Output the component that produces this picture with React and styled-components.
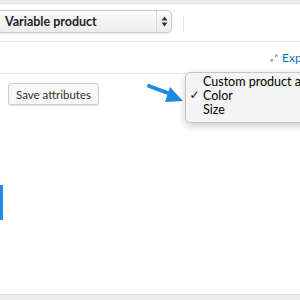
import React from 'react'
import styled, { createGlobalStyle } from 'styled-components'

const GlobalStyle = createGlobalStyle`
    html, body {
        margin: 0;
        padding: 0;
        background: #fff;
    }
    body {
        font-family: Lato, "Open Sans", "Liberation Sans", sans-serif;
    }
`

const Page = styled.div`
    position: relative;
    width: 300px;
    height: 300px;
    overflow: hidden;
    display: flex;
    flex-direction: column;
    background: #fff;
    white-space: nowrap;
`

const TopStrip = styled.div`
    height: 3px;
    background: #ececec;
    border-bottom: 1px solid #e2e2e2;
`

const ToolbarRow = styled.div`
    display: flex;
    align-items: center;
    height: 23px;
    margin-top: 6px;
`

const Select = styled.div`
    display: flex;
    align-items: center;
    width: 172px;
    height: 23px;
    box-sizing: border-box;
    border: 1px solid #c9c9c9;
    border-left: none;
    border-radius: 0 5px 5px 0;
    background: linear-gradient(#fbfbfb, #ececec);
    box-shadow: 0 1px 1px rgba(0, 0, 0, 0.08);
`

const SelectLabel = styled.span`
    flex: 1;
    padding-left: 5px;
    font-size: 12.5px;
    font-weight: bold;
    color: #222;
`

const SelectArrows = styled.span`
    display: flex;
    align-items: center;
    justify-content: center;
    width: 14px;
    height: 100%;
    border-left: 1px solid #d8d8d8;
`

const Separator = styled.div`
    width: 1px;
    height: 16px;
    margin: 4px 0 0 11px;
    background: #e4e4e4;
`

const Divider = styled.div`
    height: 1px;
    background: #e6e6e6;
    margin-top: ${p => p.$top}px;
`

const ExpandRow = styled.div`
    display: flex;
    align-items: center;
    height: 31px;
    padding-left: 270px;
`

const ExpandLink = styled.span`
    display: flex;
    align-items: center;
    gap: 4px;
    font-size: 12px;
    color: #0a74b6;
`

const AttributesRow = styled.div`
    display: flex;
    padding: 9px 8px 0;
`

const Button = styled.div`
    height: 22px;
    box-sizing: border-box;
    padding: 0 7px;
    display: flex;
    align-items: center;
    font-size: 11.5px;
    color: #333;
    background: #f7f7f7;
    border: 1px solid #cfcfcf;
    border-radius: 3px;
    box-shadow: 0 1px 0 #e4e4e4;
`

const SideMarker = styled.div`
    width: 3px;
    height: 35px;
    margin-top: 80px;
    background: #1f8ce8;
`

const Footer = styled.div`
    margin-top: auto;
    height: 5px;
    background: #ececec;
    border-top: 1px solid #e0e0e0;
`

const Menu = styled.div`
    position: absolute;
    left: 185px;
    top: 72px;
    width: 130px;
    padding: 1px 0 6px;
    background: rgba(244, 244, 244, 0.97);
    border: 1px solid #c6c6c6;
    border-radius: 5px;
    box-shadow: 0 3px 8px rgba(0, 0, 0, 0.2);
`

const MenuItem = styled.div`
    display: flex;
    align-items: center;
    height: 14px;
    font-size: 12.5px;
    color: #000;
`

const Check = styled.span`
    flex-shrink: 0;
    width: 17px;
    text-align: center;
    font-family: "DejaVu Sans", sans-serif;
    font-size: 12px;
    font-weight: bold;
`

const Pointer = styled.svg`
    position: absolute;
    left: 146px;
    top: 82px;
`

export default function App()
{
    return (
        <>
            <GlobalStyle />
            <Page>
                <TopStrip />
                <ToolbarRow>
                    <Select>
                        <SelectLabel>Variable product</SelectLabel>
                        <SelectArrows>
                            <svg width="7" height="11" viewBox="0 0 7 11">
                                <path d="M3.5 0.5 L6.5 4.5 L0.5 4.5 Z" fill="#333" />
                                <path d="M3.5 10.5 L6.5 6.5 L0.5 6.5 Z" fill="#333" />
                            </svg>
                        </SelectArrows>
                    </Select>
                    <Separator />
                </ToolbarRow>
                <Divider $top={8} />
                <ExpandRow>
                    <ExpandLink>
                        <svg width="8" height="8" viewBox="0 0 8 8">
                            <path d="M1 7 L3 5 M1 7 L1 5 M1 7 L3 7 M7 1 L5 3 M7 1 L5 1 M7 1 L7 3" stroke="#8a8a8a" strokeWidth="1" fill="none" />
                        </svg>
                        Expand
                    </ExpandLink>
                </ExpandRow>
                <Divider $top={0} />
                <AttributesRow>
                    <Button>Save attributes</Button>
                </AttributesRow>
                <SideMarker />
                <Footer />

                <Pointer width="40" height="24" viewBox="0 0 40 24">
                    <path d="M3 4 L27 13" stroke="#1a8be0" strokeWidth="4" strokeLinecap="round" />
                    <path d="M24 5 L37 19 L19 20 Z" fill="#1a8be0" />
                </Pointer>

                <Menu>
                    <MenuItem><Check />Custom product attribute</MenuItem>
                    <MenuItem><Check>✓</Check>Color</MenuItem>
                    <MenuItem><Check />Size</MenuItem>
                </Menu>
            </Page>
        </>
    )
}
